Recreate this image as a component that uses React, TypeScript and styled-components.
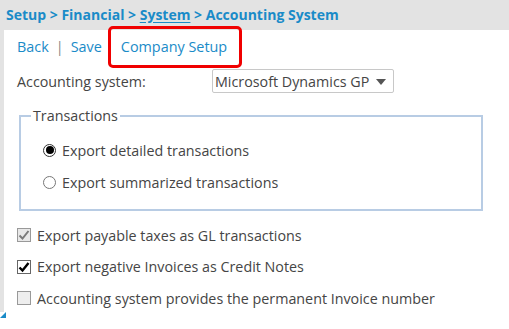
import React from "react";
import styled, { createGlobalStyle } from "styled-components";

const Global = createGlobalStyle`
  html, body { margin: 0; padding: 0; background: #ffffff; }
  body { font-family: "Open Sans", "DejaVu Sans", sans-serif; width: 509px; height: 329px; overflow: hidden; }
  * { box-sizing: border-box; }
`;

const Page = styled.div`
  display: flex;
  flex-direction: column;
  width: 509px;
  height: 329px;
`;

const Header = styled.div`
  height: 30px;
  background: #e3e3e3;
  padding-left: 6px;
  font-size: 14px;
  font-weight: 700;
  line-height: 30px;
  color: #1a8bc8;
  white-space: nowrap;
`;

const Crumb = styled.span<{ $underline?: boolean }>`
  text-decoration: ${(p) => (p.$underline ? "underline" : "none")};
  text-underline-offset: 2px;
`;

const Body = styled.div`
  display: flex;
  flex: 1;
`;

const Sidebar = styled.div`
  position: relative;
  width: 4px;
  height: 282px;
  background: #e3e3e3;
  flex: none;
`;

const Corner = styled.div`
  position: absolute;
  left: 0;
  bottom: -6px;
  width: 6px;
  height: 6px;
  background: #1a8bc8;
  clip-path: polygon(100% 0, 100% 100%, 0 100%);
`;

const Main = styled.div`
  flex: 1;
  background: #ffffff;
  padding: 7px 26px 0 13px;
  display: flex;
  flex-direction: column;
`;

const Links = styled.div`
  display: flex;
  align-items: center;
  font-size: 14.4px;
  line-height: 20px;
  color: #1a8bc8;
  white-space: nowrap;
`;

const Link = styled.span`
  color: #1a8bc8;
`;

const Sep = styled.span`
  color: #888;
  margin: 0 7px 0 7px;
`;

const Highlight = styled.span`
  position: relative;
  margin-left: 19px;
  &::after {
    content: "";
    position: absolute;
    left: -13px;
    right: -15px;
    top: -11px;
    bottom: -11px;
    border: 3px solid #f00000;
    border-radius: 5px;
  }
`;

const FieldRow = styled.div`
  display: flex;
  align-items: center;
  margin-top: 12px;
  height: 24px;
`;

const FieldLabel = styled.span`
  width: 195px;
  font-size: 14.3px;
  color: #454545;
`;

const Select = styled.div`
  width: 182px;
  height: 24px;
  border: 1px solid #c8c8c8;
  border-radius: 2px;
  display: flex;
  align-items: center;
  padding-left: 2px;
  font-size: 14.3px;
  color: #454545;
  gap: 7px;
`;

const Arrow = styled.span`
  width: 0;
  height: 0;
  border-left: 5px solid transparent;
  border-right: 5px solid transparent;
  border-top: 6px solid #555;
  margin-top: 1px;
`;

const Fieldset = styled.fieldset`
  margin: 14px 0 0 2px;
  border: 2px solid #b8cce4;
  padding: 15px 0 0 22px;
  height: 104px;
  display: flex;
  flex-direction: column;
  gap: 12px;
`;

const Legend = styled.legend`
  font-size: 14.3px;
  color: #454545;
  padding: 0 2px;
  margin-left: -12px;
  line-height: 18px;
`;

const OptionRow = styled.div`
  display: flex;
  align-items: center;
  height: 20px;
  font-size: 14.3px;
  color: #454545;
  white-space: nowrap;
`;

const Radio = styled.span<{ $on?: boolean }>`
  width: 13px;
  height: 13px;
  border-radius: 50%;
  border: 1px solid ${(p) => (p.$on ? "#333" : "#777")};
  background: #fff;
  display: flex;
  align-items: center;
  justify-content: center;
  margin-right: 6px;
  flex: none;
  &::after {
    content: "";
    display: ${(p) => (p.$on ? "block" : "none")};
    width: 8px;
    height: 8px;
    border-radius: 50%;
    background: #000;
  }
`;

const Checks = styled.div`
  display: flex;
  flex-direction: column;
  gap: 11.5px;
  margin-top: 14px;
`;

type BoxKind = "disabledOn" | "on" | "disabledOff";

const Box = styled.span<{ $kind: BoxKind }>`
  width: 14px;
  height: 14px;
  border: 1px solid ${(p) => (p.$kind === "on" ? "#666" : "#999")};
  background: ${(p) => (p.$kind === "on" ? "#fff" : p.$kind === "disabledOn" ? "#e8e8e8" : "#eeeeee")};
  display: flex;
  align-items: center;
  justify-content: center;
  margin-right: 6px;
  flex: none;
`;

const CheckRow = styled(OptionRow)``;

const CheckBox = ({ kind }: { kind: BoxKind }) => (
  <Box $kind={kind}>
    {kind !== "disabledOff" && (
      <svg width="12" height="12" viewBox="0 0 12 12">
        <path
          d="M1.5 6.5 L4.5 9.5 L10.5 2"
          fill="none"
          stroke={kind === "on" ? "#000" : "#7a7a7a"}
          strokeWidth={kind === "on" ? 2.4 : 2}
        />
      </svg>
    )}
  </Box>
);

export default function App() {
  return (
    <>
      <Global />
      <Page>
        <Header>
          <Crumb>Setup</Crumb> &gt; <Crumb>Financial</Crumb> &gt; <Crumb $underline>System</Crumb> &gt;{" "}
          <Crumb>Accounting System</Crumb>
        </Header>
        <Body>
          <Sidebar>
            <Corner />
          </Sidebar>
          <Main>
            <Links>
              <Link>Back</Link>
              <Sep>|</Sep>
              <Link>Save</Link>
              <Highlight>
                <Link>Company Setup</Link>
              </Highlight>
            </Links>
            <FieldRow>
              <FieldLabel>Accounting system:</FieldLabel>
              <Select>
                Microsoft Dynamics GP
                <Arrow />
              </Select>
            </FieldRow>
            <Fieldset>
              <Legend>Transactions</Legend>
              <OptionRow>
                <Radio $on />
                Export detailed transactions
              </OptionRow>
              <OptionRow>
                <Radio />
                Export summarized transactions
              </OptionRow>
            </Fieldset>
            <Checks>
              <CheckRow>
                <CheckBox kind="disabledOn" />
                Export payable taxes as GL transactions
              </CheckRow>
              <CheckRow>
                <CheckBox kind="on" />
                Export negative Invoices as Credit Notes
              </CheckRow>
              <CheckRow>
                <CheckBox kind="disabledOff" />
                Accounting system provides the permanent Invoice number
              </CheckRow>
            </Checks>
          </Main>
        </Body>
      </Page>
    </>
  );
}
